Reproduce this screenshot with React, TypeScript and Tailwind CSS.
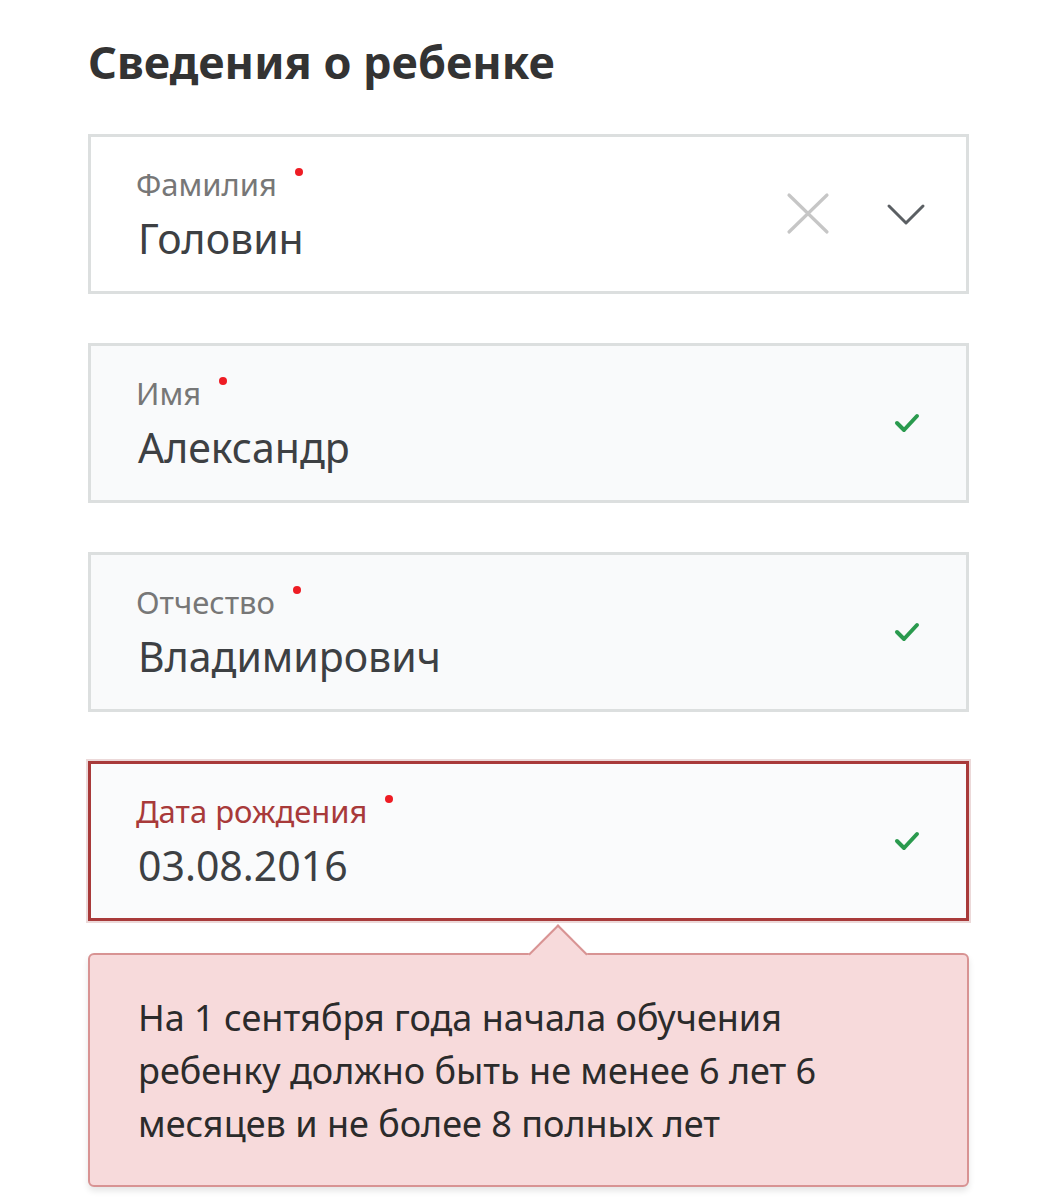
const font = { fontFamily: '"Noto Sans", "Open Sans", sans-serif' };

type FieldProps = {
  label: string;
  value: string;
  error?: boolean;
  filled?: boolean;
  clearable?: boolean;
};

const ClearIcon = () => (
  <svg width="44" height="44" viewBox="0 0 44 44" fill="none">
    <path d="M3 3 L41 40 M41 3 L3 40" stroke="#c6c6c6" strokeWidth="3.2" strokeLinecap="round" />
  </svg>
);

const Chevron = () => (
  <svg width="40" height="24" viewBox="0 0 40 24" fill="none">
    <path d="M3 4 L20 21 L37 4" stroke="#5b5f63" strokeWidth="3" strokeLinecap="round" strokeLinejoin="round" />
  </svg>
);

const CheckMark = () => (
  <svg width="26" height="22" viewBox="0 0 26 22" fill="none">
    <path d="M3 11 L10 18 L23 4" stroke="#2a9a4e" strokeWidth="4" strokeLinecap="round" strokeLinejoin="round" />
  </svg>
);

const Field = ({ label, value, error, filled, clearable }: FieldProps) => {
  return (
    <div
      className={
        "flex items-center justify-between h-[160px] pl-[45px] " +
        (error
          ? "border-[3px] border-[#a83a3a] bg-[#fafbfc] shadow-[0_0_0_2px_#ecd9d9] pr-[46px]"
          : "border-[3px] border-[#dcdfdf] " + (filled ? "bg-[#f9fafb] pr-[46px]" : "bg-white pr-[40px]"))
      }
    >
      <div className="flex flex-col">
        <div className="flex items-start mb-[8px]">
          <span
            className={
              "text-[31px] leading-[40px] " + (error ? "text-[#a83a3a]" : "text-[#777]")
            }
          >
            {label}
          </span>
          <span className="ml-[18px] mt-[4px] w-[8px] h-[8px] rounded-full bg-[#ee1c24]" />
        </div>
        <span className="text-[41px] leading-[52px] text-[#3d4043] ml-[2px]">{value}</span>
      </div>
      {clearable ? (
        <div className="flex items-center gap-[56px]">
          <ClearIcon />
          <Chevron />
        </div>
      ) : (
        <CheckMark />
      )}
    </div>
  );
};

export default function App() {
  return (
    <div className="w-[1058px] h-[1200px] bg-white overflow-hidden" style={font}>
      <div className="pl-[88px] pr-[89px] pt-[30px]">
        <h1 className="text-[45px] leading-[64px] font-bold text-[#333] mb-[40px]">
          Сведения о ребенке
        </h1>
        <div className="flex flex-col gap-[49px]">
          <Field label="Фамилия" value="Головин" clearable />
          <Field label="Имя" value="Александр" filled />
          <Field label="Отчество" value="Владимирович" filled />
          <Field label="Дата рождения" value="03.08.2016" error />
        </div>
        <div className="relative mt-[32px]">
          {/* arrow */}
          <div className="absolute left-[449px] -top-[20px] w-[42px] h-[42px] rotate-45 bg-[#f7dadb] border-l-2 border-t-2 border-[#d89393]" />
          <div className="rounded-[6px] border-2 border-[#d89393] bg-[#f7dadb] px-[48px] pt-[36px] pb-[35px] shadow-[0_4px_6px_rgba(0,0,0,0.1)]">
            <p className="relative text-[36px] leading-[53px] text-[#2b2b2b]">
              На 1 сентября года начала обучения ребенку должно быть не менее 6 лет 6 месяцев и не более 8 полных лет
            </p>
          </div>
        </div>
      </div>
    </div>
  );
}
